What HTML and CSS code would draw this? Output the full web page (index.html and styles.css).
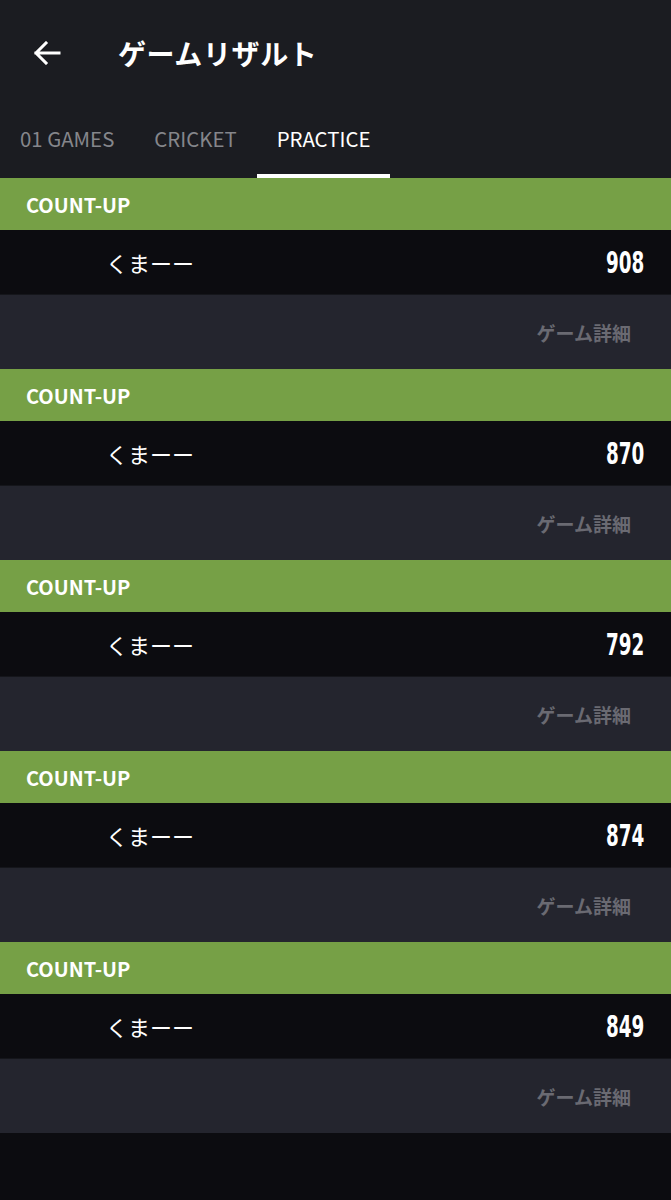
FILE: index.html
```html
<!DOCTYPE html>
<html lang="ja">
<head>
  <meta charset="UTF-8" />
  <meta name="viewport" content="width=device-width, initial-scale=1.0" />
  <title>ゲームリザルト</title>
  <link rel="stylesheet" href="styles.css">
</head>
<body>
  <header class="top">
    <div class="titlebar">
      <svg class="back" width="28" height="24" viewBox="0 0 28 24">
        <path d="M26 12H3M13 2L3 12l10 10" fill="none" stroke="#fff" stroke-width="3" stroke-linecap="square"/>
      </svg>
      <h1>ゲームリザルト</h1>
    </div>
    <nav class="tabs">
      <div class="tab">01 GAMES</div>
      <div class="tab">CRICKET</div>
      <div class="tab active">PRACTICE</div>
    </nav>
  </header>

  <main class="results">
    <section class="result">
      <div class="mode">COUNT-UP</div>
      <div class="player"><span class="name">くまーー</span><span class="score">908</span></div>
      <div class="detail">ゲーム詳細</div>
    </section>
    <section class="result">
      <div class="mode">COUNT-UP</div>
      <div class="player"><span class="name">くまーー</span><span class="score">870</span></div>
      <div class="detail">ゲーム詳細</div>
    </section>
    <section class="result">
      <div class="mode">COUNT-UP</div>
      <div class="player"><span class="name">くまーー</span><span class="score">792</span></div>
      <div class="detail">ゲーム詳細</div>
    </section>
    <section class="result">
      <div class="mode">COUNT-UP</div>
      <div class="player"><span class="name">くまーー</span><span class="score">874</span></div>
      <div class="detail">ゲーム詳細</div>
    </section>
    <section class="result">
      <div class="mode">COUNT-UP</div>
      <div class="player"><span class="name">くまーー</span><span class="score">849</span></div>
      <div class="detail">ゲーム詳細</div>
    </section>
  </main>
</body>
</html>
```

FILE: styles.css
```css
body {
  margin: 0;
  font-family: "Noto Sans CJK JP", "Noto Sans", sans-serif;
  background: #0c0c10;
  color: #fff;
  min-height: 1200px;
}

.top {
  background: #1b1c21;
}

.titlebar {
  height: 106px;
  display: flex;
  align-items: center;
}

.back {
  margin-left: 33px;
}

h1 {
  margin: 0 0 0 57px;
  font-size: 28px;
  font-weight: 700;
  letter-spacing: 0.6px;
}

.tabs {
  display: flex;
  height: 72px;
}

.tab {
  padding: 0 20px 8px;
  font-size: 20.4px;
  color: #85868b;
  display: flex;
  align-items: center;
  box-sizing: border-box;
}

.tab.active {
  color: #fff;
  border-bottom: 4px solid #fff;
  padding-bottom: 4px;
}

.result {
  display: flex;
  flex-direction: column;
}

.mode {
  height: 52px;
  background: #76a046;
  display: flex;
  align-items: center;
  padding-left: 26px;
  font-size: 20px;
  font-weight: 700;
}

.player {
  height: 65px;
  box-sizing: border-box;
  background: #0c0c10;
  display: flex;
  align-items: center;
  justify-content: space-between;
  padding: 0 27px 0 106px;
  border-bottom: 1px solid #15161b;
}

.name {
  font-size: 22px;
}

.score {
  font-family: "DejaVu Sans Condensed", "DejaVu Sans", sans-serif;
  font-weight: 700;
  font-size: 30px;
  display: inline-block;
  transform: scaleX(0.68);
  transform-origin: right center;
}

.detail {
  height: 74px;
  background: #24252e;
  display: flex;
  align-items: center;
  justify-content: flex-end;
  padding-right: 40px;
  font-size: 19px;
  font-weight: 700;
  color: #6a6a72;
}
```
